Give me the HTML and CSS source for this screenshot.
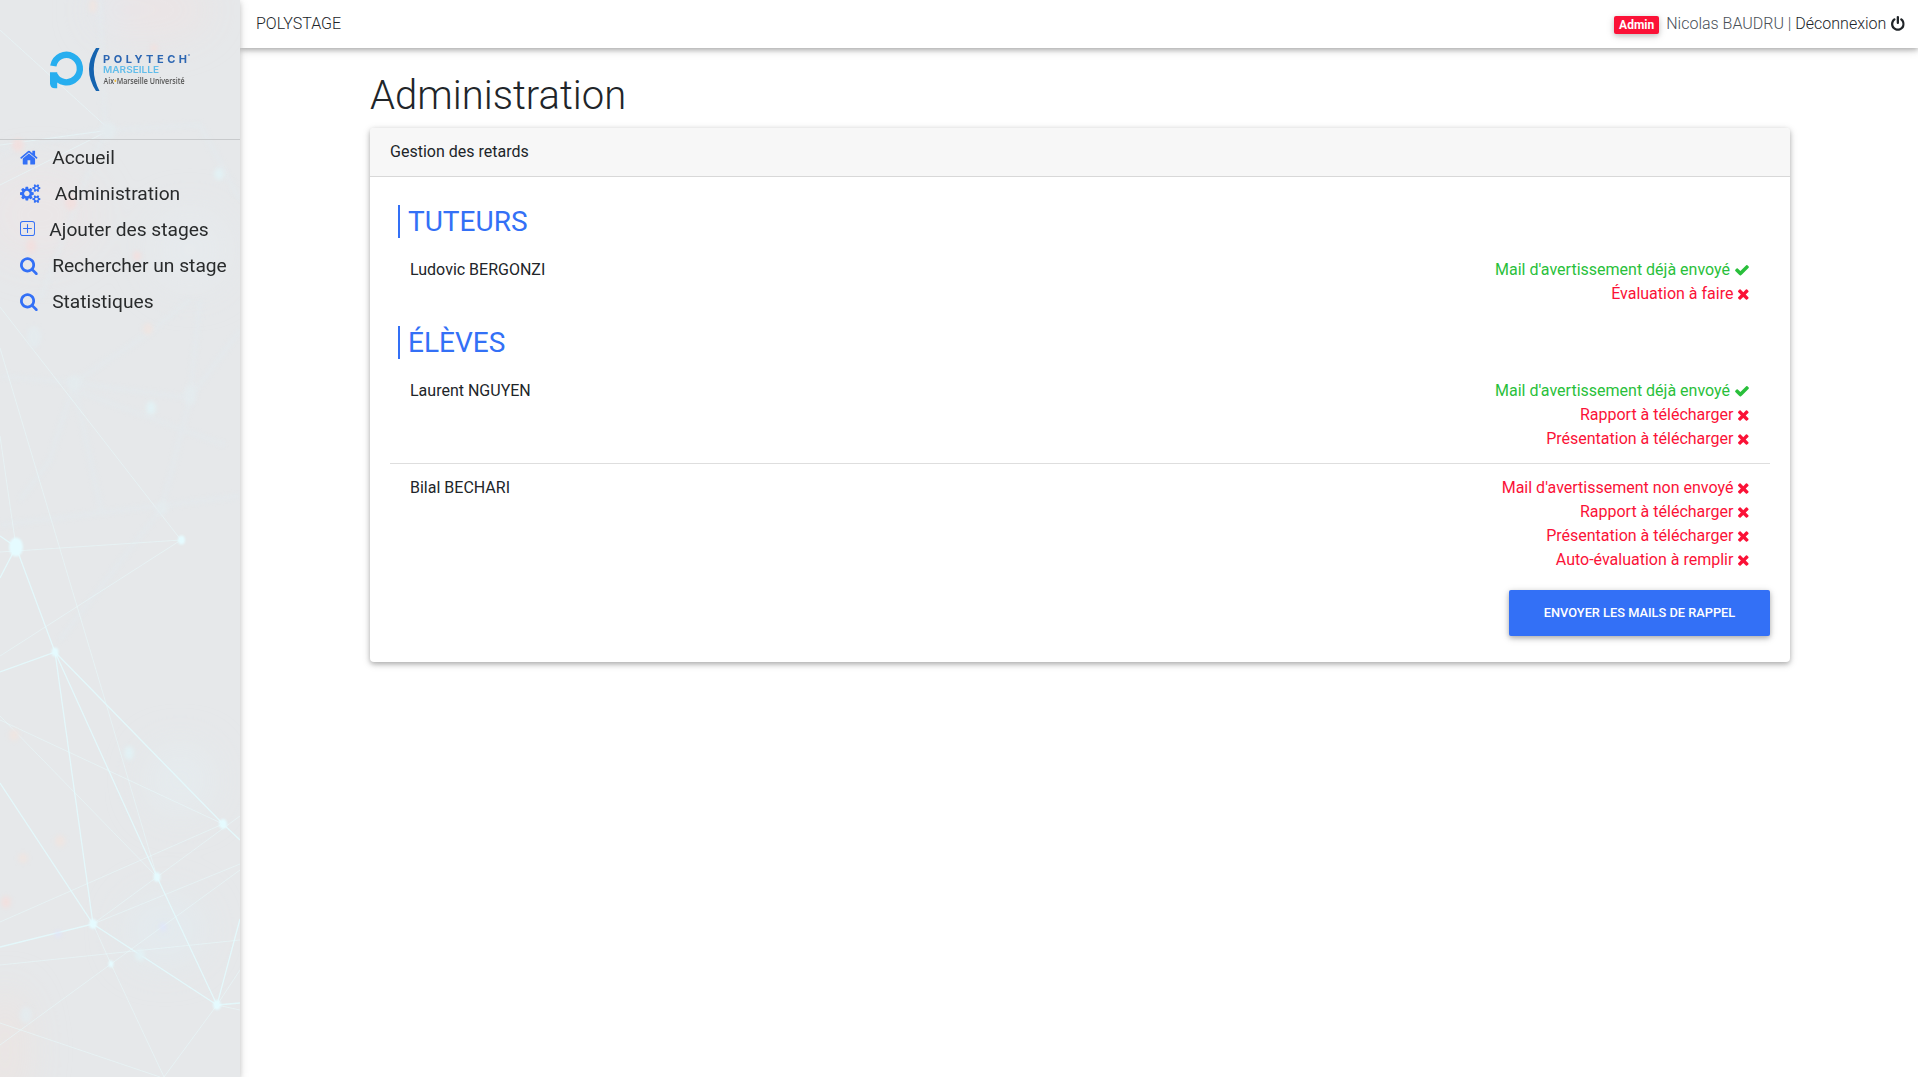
FILE: index.html
```html
<!DOCTYPE html>
<html lang="fr">
<head>
<meta charset="utf-8">
<title>Polystage - Administration</title>
<link rel="stylesheet" href="styles.css">
</head>
<body>
<svg class="sprite" xmlns="http://www.w3.org/2000/svg">
  <symbol id="home" viewBox="64 0 1664 1792"><path d="M1472 992v480q0 26-19 45t-45 19h-384v-384h-256v384h-384q-26 0-45-19t-19-45v-480q0-1 .5-3t.5-3l575-474 575 474q1 2 1 6zm223-69l-62 74q-8 9-21 11h-3q-13 0-21-7l-692-577-692 577q-12 8-24 7-13-2-21-11l-62-74q-8-10-7-23.500t11-21.500l719-599q32-26 76-26t76 26l244 204v-195q0-14 9-23t23-9h192q14 0 23 9t9 23v408l219 182q10 8 11 21.500t-7 23.500z"/></symbol>
  <symbol id="cogs" viewBox="-64 0 1920 1792"><path d="M832 896q0-106-75-181t-181-75-181 75-75 181 75 181 181 75 181-75 75-181zm768 512q0-52-38-90t-90-38-90 38-38 90q0 53 37.500 90.500t90.500 37.500 90.500-37.500 37.500-90.500zm0-1024q0-52-38-90t-90-38-90 38-38 90q0 53 37.500 90.500t90.500 37.500 90.500-37.500 37.500-90.500zm-384 421v185q0 10-7 19.500t-16 10.500l-155 24q-11 35-32 76 34 48 90 115 7 11 7 20 0 12-7 19-23 30-82.500 89.500t-78.500 59.500q-11 0-21-7l-115-90q-37 19-77 31-11 108-23 155-7 24-30 24h-186q-11 0-20-7.500t-10-17.500l-23-153q-34-10-75-31l-118 89q-7 7-20 7-11 0-21-8-144-133-144-160 0-9 7-19 10-14 41-53t47-61q-23-44-35-82l-152-24q-10-1-17-9.500t-7-19.500v-185q0-10 7-19.500t16-10.500l155-24q11-35 32-76-34-48-90-115-7-11-7-20 0-12 7-20 22-30 82-89t79-59q11 0 21 7l115 90q34-18 77-32 11-108 23-154 7-24 30-24h186q11 0 20 7.500t10 17.500l23 153q34 10 75 31l118-89q8-7 20-7 11 0 21 8 144 133 144 160 0 8-7 19-12 16-42 54t-45 60q23 48 34 82l152 23q10 2 17 10.500t7 19.500zm640 533v140q0 16-149 31-12 27-30 52 51 113 51 138 0 4-4 7-122 71-124 71-8 0-46-47t-52-68q-20 2-30 2t-30-2q-14 21-52 68t-46 47q-2 0-124-71-4-3-4-7 0-25 51-138-18-25-30-52-149-15-149-31v-140q0-16 149-31 13-29 30-52-51-113-51-138 0-4 4-7 4-2 35-20t59-34 30-16q8 0 46 46.500t52 67.500q20-2 30-2t30 2q51-71 92-112l6-2q4 0 124 70 4 3 4 7 0 25-51 138 17 23 30 52 149 15 149 31zm0-1024v140q0 16-149 31-12 27-30 52 51 113 51 138 0 4-4 7-122 71-124 71-8 0-46-47t-52-68q-20 2-30 2t-30-2q-14 21-52 68t-46 47q-2 0-124-71-4-3-4-7 0-25 51-138-18-25-30-52-149-15-149-31v-140q0-16 149-31 13-29 30-52-51-113-51-138 0-4 4-7 4-2 35-20t59-34 30-16q8 0 46 46.500t52 67.500q20-2 30-2t30 2q51-71 92-112l6-2q4 0 124 70 4 3 4 7 0 25-51 138 17 23 30 52 149 15 149 31z"/></symbol>
  <symbol id="plus" viewBox="0 0 16 16"><path d="M13 1a2 2 0 0 1 2 2v10a2 2 0 0 1-2 2H3a2 2 0 0 1-2-2V3a2 2 0 0 1 2-2h10zM3 0a3 3 0 0 0-3 3v10a3 3 0 0 0 3 3h10a3 3 0 0 0 3-3V3a3 3 0 0 0-3-3H3z"/><path d="M8 3.200a.55.55 0 0 1 .55.55v3.700h3.700a.55.55 0 0 1 0 1.100h-3.700v3.700a.55.55 0 0 1-1.100 0v-3.700h-3.700a.55.55 0 0 1 0-1.100h3.700v-3.700A.55.55 0 0 1 8 3.200z"/></symbol>
  <symbol id="search" viewBox="64 0 1664 1792"><path d="M1216 832q0-185-131.500-316.500t-316.500-131.500-316.500 131.500-131.500 316.500 131.500 316.500 316.500 131.500 316.500-131.500 131.500-316.500zm512 832q0 52-38 90t-90 38q-54 0-90-38l-343-342q-179 124-399 124-143 0-273.500-55.500t-225-150-150-225-55.500-273.500 55.500-273.500 150-225 225-150 273.500-55.500 273.500 55.500 225 150 150 225 55.500 273.500q0 220-124 399l343 343q37 37 37 90z"/></symbol>
  <symbol id="check" viewBox="0 0 1792 1792"><path d="M1671 566q0 40-28 68l-724 724-136 136q-28 28-68 28t-68-28l-136-136-362-362q-28-28-28-68t28-68l136-136q28-28 68-28t68 28l294 295 656-657q28-28 68-28t68 28l136 136q28 28 28 68z"/></symbol>
  <symbol id="times" viewBox="192 0 1408 1792"><path d="M1490 1322q0 40-28 68l-136 136q-28 28-68 28t-68-28l-294-294-294 294q-28 28-68 28t-68-28l-136-136q-28-28-28-68t28-68l294-294-294-294q-28-28-28-68t28-68l136-136q28-28 68-28t68 28l294 294 294-294q28-28 68-28t68 28l136 136q28 28 28 68t-28 68l-294 294 294 294q28 28 28 68z"/></symbol>
  <symbol id="power" viewBox="128 0 1536 1792"><path d="M1664 896q0 156-61 298t-164 245-245 164-298 61-298-61-245-164-164-245-61-298q0-182 80.500-343t226.500-270q43-32 95.500-25t83.500 50q32 42 24.500 94.500t-49.500 84.500q-98 74-151.500 181t-53.500 228q0 104 40.500 198.500t109.500 163.500 163.500 109.500 198.500 40.500 198.500-40.500 163.500-109.500 109.500-163.500 40.500-198.500q0-121-53.500-228t-151.500-181q-42-32-49.500-84.500t24.500-94.500q31-43 84-50t95 25q146 109 226.500 270t80.500 343zm-640-768v640q0 52-38 90t-90 38-90-38-38-90v-640q0-52 38-90t90-38 90 38 38 90z"/></symbol>
</svg>

<div class="app">
  <aside class="sidebar">
    <svg class="network" viewBox="0 0 240 1077" preserveAspectRatio="none">
      <defs>
        <filter id="soft" x="-100%" y="-100%" width="300%" height="300%"><feGaussianBlur stdDeviation="2"/></filter>
        <filter id="haze" x="-100%" y="-100%" width="300%" height="300%"><feGaussianBlur stdDeviation="18"/></filter>
        <filter id="dot" x="-50%" y="-50%" width="200%" height="200%"><feGaussianBlur stdDeviation=".9"/></filter>
      </defs>
      <g filter="url(#haze)">
        <ellipse cx="150" cy="10" rx="60" ry="30" fill="#efe2e2" opacity=".6"/>
        <ellipse cx="40" cy="215" rx="60" ry="50" fill="#efe4e3" opacity=".4"/>
        <ellipse cx="5" cy="1050" rx="25" ry="60" fill="#ebe4e2" opacity=".9"/>
        <ellipse cx="180" cy="780" rx="35" ry="35" fill="#e5ebee"/>
        <ellipse cx="190" cy="250" rx="40" ry="40" fill="#e6eaed"/>
        <ellipse cx="110" cy="10" rx="14" ry="16" fill="#e2e8ef"/>
        <ellipse cx="165" cy="930" rx="40" ry="35" fill="#e3eaee"/>
      </g>
      <g stroke="#e3eaee" stroke-width="5" opacity=".5" fill="none" filter="url(#soft)">
        <path d="M0 376L74 383L190 398L240 330M74 383L150 332L190 300M190 398L162 508L110 575L60 640M74 383L50 460L20 500M74 383L102 515M0 525L240 496M80 392L225 445M190 398L200 300M100 0L105 130L200 125L240 200M105 130L0 150M105 130L40 300"/>
      </g>
      <g stroke="#e8f8fa" stroke-width="1" fill="none" opacity=".6">
        <path d="M0 307L181 540M0 348L102 690L157 877M0 436L16 547M0 552L181 540L0 656M0 720L223 824L0 922M0 716L157 877M93 924L240 816M93 924L240 864M0 1045L111 964L240 870M0 965L240 940M93 924L111 964L164 1077L217 1005L240 970M0 1023L160 1077M0 30L110 130L0 185M0 145L110 130M217 1005L240 1010"/>
      </g>
      <g stroke="#e4f9fc" stroke-width="1.300" fill="none" opacity=".95">
        <path d="M0 536L16 547L0 578M16 547L55 652L0 672M55 652L93 924L0 947M55 652L157 877L217 1005M55 652L223 824L240 840M0 783L93 924L217 1005L240 919M217 1005L240 1003"/>
      </g>
      <g fill="#e5fbff" filter="url(#dot)">
        <ellipse cx="16" cy="547" rx="7" ry="9.500"/><ellipse cx="181.500" cy="540" rx="3.500" ry="4.500"/>
        <ellipse cx="55" cy="652" rx="3.500" ry="4.500"/><ellipse cx="223" cy="824" rx="4" ry="5"/>
        <ellipse cx="157" cy="877" rx="3.500" ry="5"/><ellipse cx="93" cy="924" rx="4" ry="5"/>
        <ellipse cx="217" cy="1005" rx="4" ry="5"/><ellipse cx="111" cy="964" rx="2.500" ry="3.500"/>
      </g>
      <g filter="url(#soft)">
        <g fill="#e2f1f4"><ellipse cx="151" cy="408" rx="5" ry="7"/><ellipse cx="129" cy="753" rx="5" ry="7"/><ellipse cx="219" cy="174" rx="5" ry="6"/><ellipse cx="140" cy="955" rx="5" ry="6"/></g>
        <g fill="#e4ebee"><ellipse cx="34" cy="337" rx="7" ry="11"/><ellipse cx="74" cy="383" rx="7" ry="8"/><ellipse cx="190" cy="395" rx="6" ry="10"/><ellipse cx="162" cy="508" rx="6" ry="7"/><ellipse cx="26" cy="1015" rx="6" ry="8"/><ellipse cx="108" cy="131" rx="8" ry="9"/></g>
        <g fill="#f1e0df"><ellipse cx="18" cy="145" rx="6" ry="7"/><ellipse cx="71" cy="203" rx="6" ry="7"/><ellipse cx="31" cy="246" rx="5" ry="7"/><ellipse cx="154" cy="48" rx="3" ry="4"/><ellipse cx="137" cy="256" rx="4" ry="5"/><ellipse cx="6" cy="902" rx="5" ry="6"/></g>
        <g fill="#eee5e2"><ellipse cx="148" cy="329" rx="5" ry="6"/><ellipse cx="14" cy="735" rx="5" ry="6"/><ellipse cx="60" cy="841" rx="5" ry="6"/><ellipse cx="23" cy="858" rx="5" ry="5"/><ellipse cx="93" cy="6" rx="4" ry="7"/></g>
        <g fill="#dfe5fb"><ellipse cx="163" cy="927" rx="3" ry="4"/><ellipse cx="58" cy="934" rx="3" ry="3"/></g>
      </g>
    </svg>
    <div class="brand">
      <svg class="logo" width="142" height="46" viewBox="49 46 142 46">
        <path d="M53.300 66A13.400 13.700 0 1 1 54.600 75" fill="none" stroke="#27aeef" stroke-width="6.400"/>
        <path d="M50 72.300h7.200v15.900h-2.200q-5 0-5-5z" fill="#27aeef"/>
        <path d="M96 48h3.500Q88 69 99.500 91H96Q82 69 96 48z" fill="#1563af"/>
        <text x="103" y="63.200" class="logo-main" textLength="84">POLYTECH</text>
        <circle cx="189" cy="55" r=".8" fill="#2c66b2"/>
        <text x="103" y="72.700" class="logo-city" textLength="56" lengthAdjust="spacingAndGlyphs">MARSEILLE</text>
        <text x="103.500" y="83.700" class="logo-univ" textLength="81" lengthAdjust="spacingAndGlyphs">Aix<tspan fill="#f2bd3c">•</tspan>Marseille Université</text>
      </svg>
    </div>
    <nav class="menu">
      <a class="item"><svg class="ico home"><use href="#home"/></svg>Accueil</a>
      <a class="item"><svg class="ico cogs"><use href="#cogs"/></svg>Administration</a>
      <a class="item"><svg class="ico plus"><use href="#plus"/></svg>Ajouter des stages</a>
      <a class="item"><svg class="ico"><use href="#search"/></svg>Rechercher un stage</a>
      <a class="item"><svg class="ico"><use href="#search"/></svg>Statistiques</a>
    </nav>
  </aside>

  <div class="page">
    <header class="topbar">
      <span class="app-name">POLYSTAGE</span>
      <div class="user"><span class="badge">Admin</span><span class="who">Nicolas BAUDRU |&nbsp;</span><a class="logout">Déconnexion</a><svg class="power"><use href="#power"/></svg></div>
    </header>
    <main class="content">
      <h1>Administration</h1>
      <section class="card">
        <div class="card-header">Gestion des retards</div>
        <div class="card-body">
          <h3>TUTEURS</h3>
          <div class="row">
            <div>Ludovic BERGONZI</div>
            <ul>
              <li class="ok">Mail d'avertissement déjà envoyé <svg class="check"><use href="#check"/></svg></li>
              <li>Évaluation à faire <svg><use href="#times"/></svg></li>
            </ul>
          </div>
          <h3>ÉLÈVES</h3>
          <div class="row">
            <div>Laurent NGUYEN</div>
            <ul>
              <li class="ok">Mail d'avertissement déjà envoyé <svg class="check"><use href="#check"/></svg></li>
              <li>Rapport à télécharger <svg><use href="#times"/></svg></li>
              <li>Présentation à télécharger <svg><use href="#times"/></svg></li>
            </ul>
          </div>
          <div class="row divided">
            <div>Bilal BECHARI</div>
            <ul>
              <li>Mail d'avertissement non envoyé <svg><use href="#times"/></svg></li>
              <li>Rapport à télécharger <svg><use href="#times"/></svg></li>
              <li>Présentation à télécharger <svg><use href="#times"/></svg></li>
              <li>Auto-évaluation à remplir <svg><use href="#times"/></svg></li>
            </ul>
          </div>
          <div class="actions"><button class="send">ENVOYER LES MAILS DE RAPPEL</button></div>
        </div>
      </section>
    </main>
  </div>
</div>
</body>
</html>
```

FILE: styles.css
```css
* { box-sizing: border-box; }
body {
  margin: 0;
  font: 400 16px/24px Roboto, "Liberation Sans", sans-serif;
  color: #212529;
  background: #fff;
}
svg { fill: currentColor; }
.sprite { display: none; }
.app { display: flex; height: 1077px; overflow: hidden; }

.sidebar {
  position: relative;
  z-index: 2;
  width: 240px;
  flex: none;
  background: #e6e8ea;
  box-shadow: 0 2px 5px rgba(0, 0, 0, .16), 0 2px 10px rgba(0, 0, 0, .12);
}
.network { position: absolute; inset: 0; width: 240px; height: 100%; overflow: hidden; }
.brand {
  position: relative;
  height: 140px;
  padding: 46px 0 0 49px;
  border-bottom: 1px solid #c8cacc;
}
.logo { display: block; overflow: visible; }
.logo-main { font: 700 11px Inter, sans-serif; fill: #2c66b2; }
.logo-city { font: 600 9px Inter, sans-serif; fill: #62bdea; }
.logo-univ { font: 600 8px "Open Sans", sans-serif; fill: #555; }
.menu { position: relative; }
.item {
  display: flex;
  align-items: center;
  height: 36px;
  padding: 0 0 1px 20px;
  font-size: 19.2px;
  color: #292b2c;
  white-space: nowrap;
}
.ico {
  flex: none;
  width: 17.830px;
  height: 19.200px;
  margin-right: 14.300px;
  color: #3370f6;
}
.cogs { width: 20.570px; }
.plus { width: 15px; height: 15px; margin-bottom: 2px; }

.page { flex: 1; min-width: 0; }
.topbar {
  position: relative;
  z-index: 1;
  display: flex;
  justify-content: space-between;
  align-items: center;
  height: 48px;
  padding: 0 13px 0 16px;
  font-weight: 300;
  box-shadow: 0 2px 5px rgba(0, 0, 0, .26), 0 2px 10px rgba(0, 0, 0, .12);
}
.user { display: flex; align-items: center; color: #495057; }
.badge {
  height: 18px;
  margin: 2px 7px 0 0;
  padding: 0 5px;
  border-radius: 2px;
  background: #fb1237;
  color: #fff;
  font-size: 12px;
  line-height: 18px;
  font-weight: 700;
  box-shadow: 0 2px 5px rgba(0, 0, 0, .16), 0 2px 10px rgba(0, 0, 0, .12);
}
.logout { color: #212529; }
.power { width: 13.700px; height: 16px; margin: 0 0 1px 5px; color: #212529; }

.content { padding: 24px 128px 0 130px; }
h1 { margin: 0 0 8px; font-size: 40px; line-height: 48px; font-weight: 300; }
.card {
  border-radius: 4px;
  background: #fff;
  box-shadow: 0 2px 5px rgba(0, 0, 0, .26), 0 2px 10px rgba(0, 0, 0, .12);
}
.card-header {
  padding: 12px 20px;
  border-bottom: 1px solid #d8d8d8;
  border-radius: 4px 4px 0 0;
  background: #f7f7f7;
}
.card-body { padding: 28px 20px 26px; }
h3 {
  margin: 0 0 20px 8px;
  padding-left: 8px;
  border-left: 2px solid #3370f6;
  color: #3370f6;
  font-size: 28px;
  line-height: 33px;
  font-weight: 400;
}
.row { display: flex; justify-content: space-between; padding: 0 20px; }
.row + h3 { margin-top: 20px; }
.divided { margin-top: 12px; padding-top: 12px; border-top: 1px solid #dedede; }
ul { margin: 0; padding: 0; list-style: none; color: #fb1237; }
li { display: flex; justify-content: flex-end; align-items: center; }
li svg { width: 12.570px; height: 16px; margin: 0 0 1px 4px; }
.ok { color: #29bf3b; }
.ok svg { width: 16px; }
.actions { display: flex; justify-content: flex-end; margin-top: 18px; }
.send {
  width: 261px;
  height: 46px;
  padding: 0 0 2px;
  border: 0;
  border-radius: 2px;
  background: #3370f6;
  color: #fff;
  font: 500 12.8px Roboto, sans-serif;
  box-shadow: 0 2px 5px rgba(0, 0, 0, .26), 0 2px 10px rgba(0, 0, 0, .12);
}
```
